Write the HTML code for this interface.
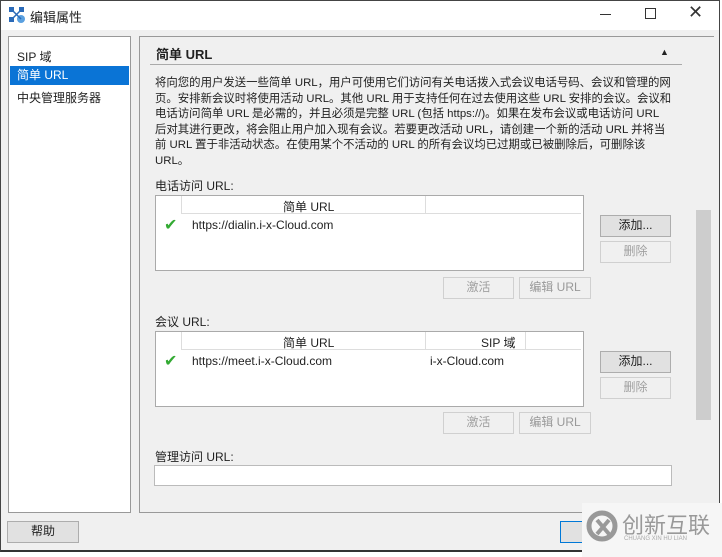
<!DOCTYPE html>
<html><head><meta charset="utf-8"><style>
*{box-sizing:border-box;margin:0;padding:0}
body{width:722px;height:557px;position:relative;overflow:hidden;background:#fff;font-family:"Liberation Sans","Noto Sans CJK SC",sans-serif;font-size:12px;color:#222}
.a{position:absolute}
.win{left:0;top:0;width:720px;height:552px;background:#f0f0f0;border:1px solid #444;border-bottom:2px solid #333}
.btn{position:absolute;border:1px solid #adadad;background:#e1e1e1;text-align:center;line-height:19px;font-size:12px}
.dis{border-color:#d0d0d0;background:#f0f0f0;color:#a0a0a0}
.box{position:absolute;background:#fff;border:1px solid #aaa}
</style></head><body>
<div class="a win"></div>
<div class="a" style="left:1px;top:1px;width:718px;height:29px;background:#fff"></div>
<svg class="a" style="left:8px;top:6px" width="18" height="18"><rect x="1" y="1" width="5" height="5" fill="#2a6ab8"/><rect x="11" y="1" width="5" height="5" fill="#2a6ab8"/><rect x="1" y="11" width="5" height="5" fill="#2a6ab8"/><circle cx="13" cy="13" r="4" fill="#5aa0e0"/><path d="M4 4L13 13M13 4L4 13" stroke="#2a6ab8" stroke-width="1.5"/></svg>
<div class="a" style="left:30px;top:7px;font-size:13px">编辑属性</div>
<div class="a" style="left:600px;top:14px;width:11px;height:1px;background:#333"></div>
<div class="a" style="left:645px;top:8px;width:11px;height:11px;border:1px solid #333"></div>
<div class="a" style="left:688px;top:2px;font-size:18px;color:#333">✕</div>
<div class="box" style="left:8px;top:36px;width:123px;height:477px;border-color:#999"></div>
<div class="a" style="left:17px;top:48px">SIP 域</div>
<div class="a" style="left:10px;top:66px;width:119px;height:19px;background:#0a74d6;color:#fff;padding-left:7px;line-height:19px">简单 URL</div>
<div class="a" style="left:17px;top:89px">中央管理服务器</div>
<div class="a" style="left:139px;top:36px;width:575px;height:477px;border:1px solid #999;border-right:none"></div>
<div class="a" style="left:695px;top:37px;width:17px;height:475px;background:#f0f0f0"></div>
<div class="a" style="left:696px;top:210px;width:15px;height:210px;background:#cdcdcd"></div>
<div class="a" style="left:156px;top:44px;font-weight:bold;font-size:13px">简单 URL</div>
<div class="a" style="left:660px;top:47px;font-size:9px">▲</div>
<div class="a" style="left:150px;top:64px;width:532px;height:1px;background:#aaa"></div>
<div class="a" style="left:155px;top:76px;line-height:15.6px;font-size:11.4px;white-space:nowrap">将向您的用户发送一些简单 URL，用户可使用它们访问有关电话拨入式会议电话号码、会议和管理的网<br>页。安排新会议时将使用活动 URL。其他 URL 用于支持任何在过去使用这些 URL 安排的会议。会议和<br>电话访问简单 URL 是必需的，并且必须是完整 URL (包括 https://)。如果在发布会议或电话访问 URL<br>后对其进行更改，将会阻止用户加入现有会议。若要更改活动 URL，请创建一个新的活动 URL 并将当<br>前 URL 置于非活动状态。在使用某个不活动的 URL 的所有会议均已过期或已被删除后，可删除该<br>URL。</div>
<div class="a" style="left:155px;top:177px">电话访问 URL:</div>
<div class="box" style="left:155px;top:195px;width:429px;height:76px"></div>
<div class="a" style="left:181px;top:213px;width:400px;height:1px;background:#ddd"></div>
<div class="a" style="left:181px;top:196px;width:1px;height:17px;background:#ddd"></div>
<div class="a" style="left:425px;top:196px;width:1px;height:17px;background:#ddd"></div>
<div class="a" style="left:283px;top:198px">简单 URL</div>
<div class="a" style="left:164px;top:215px;color:#3a3;font-size:16px">✔</div>
<div class="a" style="left:192px;top:218px">https://dialin.i-x-Cloud.com</div>
<div class="btn" style="left:600px;top:215px;width:71px;height:22px">添加...</div>
<div class="btn dis" style="left:600px;top:241px;width:71px;height:22px">删除</div>
<div class="btn dis" style="left:443px;top:277px;width:71px;height:22px">激活</div>
<div class="btn dis" style="left:519px;top:277px;width:72px;height:22px;color:#999">编辑 URL</div>
<div class="a" style="left:155px;top:313px">会议 URL:</div>
<div class="box" style="left:155px;top:331px;width:429px;height:76px"></div>
<div class="a" style="left:181px;top:349px;width:400px;height:1px;background:#ddd"></div>
<div class="a" style="left:181px;top:332px;width:1px;height:17px;background:#ddd"></div>
<div class="a" style="left:425px;top:332px;width:1px;height:17px;background:#ddd"></div>
<div class="a" style="left:525px;top:332px;width:1px;height:17px;background:#ddd"></div>
<div class="a" style="left:283px;top:334px">简单 URL</div>
<div class="a" style="left:481px;top:334px">SIP 域</div>
<div class="a" style="left:164px;top:351px;color:#3a3;font-size:16px">✔</div>
<div class="a" style="left:192px;top:354px">https://meet.i-x-Cloud.com</div>
<div class="a" style="left:430px;top:354px">i-x-Cloud.com</div>
<div class="btn" style="left:600px;top:351px;width:71px;height:22px">添加...</div>
<div class="btn dis" style="left:600px;top:377px;width:71px;height:22px">删除</div>
<div class="btn dis" style="left:443px;top:412px;width:71px;height:22px">激活</div>
<div class="btn dis" style="left:519px;top:412px;width:72px;height:22px;color:#999">编辑 URL</div>
<div class="a" style="left:155px;top:448px">管理访问 URL:</div>
<div class="box" style="left:154px;top:465px;width:518px;height:21px;border-color:#bbb"></div>
<div class="btn" style="left:7px;top:521px;width:72px;height:22px">帮助</div>
<div class="btn" style="left:560px;top:521px;width:30px;height:22px;border-color:#0078d7"></div>
<div class="a" style="left:582px;top:503px;width:140px;height:54px;background:#f6f6f6"></div>
<svg class="a" style="left:586px;top:510px" width="32" height="32"><circle cx="16" cy="16" r="13" fill="none" stroke="#999" stroke-width="5"/><path d="M11 10L23 24M23 10L11 24" stroke="#999" stroke-width="4"/></svg>
<div class="a" style="left:622px;top:508px;font-size:22px;color:#999">创新互联</div>
<div class="a" style="left:624px;top:536px;font-size:6px;color:#aaa">CHUANG XIN HU LIAN</div>
</body></html>
